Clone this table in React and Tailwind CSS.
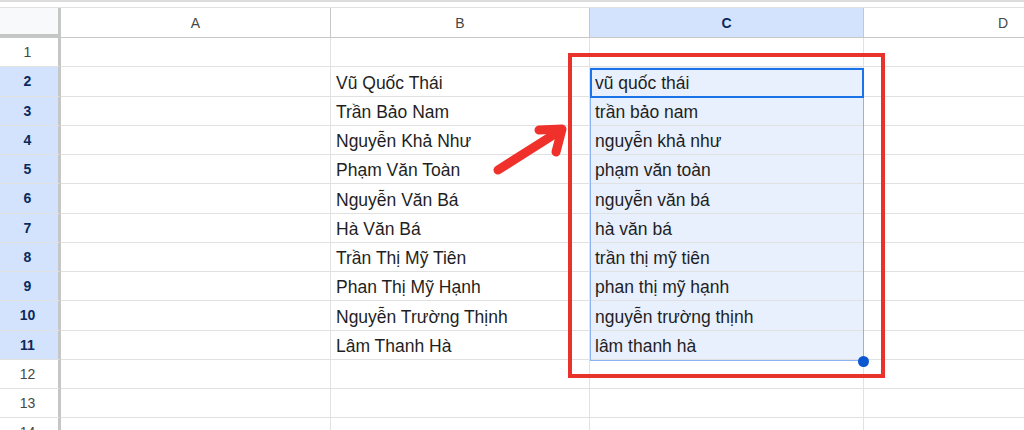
import React from 'react';

const names = [
  'Vũ Quốc Thái',
  'Trần Bảo Nam',
  'Nguyễn Khả Như',
  'Phạm Văn Toàn',
  'Nguyễn Văn Bá',
  'Hà Văn Bá',
  'Trần Thị Mỹ Tiên',
  'Phan Thị Mỹ Hạnh',
  'Nguyễn Trường Thịnh',
  'Lâm Thanh Hà',
];

const rows = Array.from({ length: 14 }, (_, i) => i + 1);

// One sheet row: number cell + columns A..D
const Row = ({ n }) => {
  const idx = n - 2;
  const name = idx >= 0 && idx < names.length ? names[idx] : '';
  const selected = name !== '';
  return (
    <div className="flex h-[29.25px] shrink-0">
      <div
        className={`w-[61px] shrink-0 flex items-center justify-center border-r-[3px] border-r-[#c4c7c5] border-b border-b-[#e1e1e1] pr-[3px] pt-[1px] text-[14px] ${
          selected ? 'bg-[#d3e3fd] text-[#0b2a5c] font-bold' : 'bg-white text-[#444746]'
        }`}
      >
        {n}
      </div>
      <div className="w-[270px] shrink-0 border-r border-b border-[#e1e1e1]" />
      <div className="w-[259px] shrink-0 border-r border-b border-[#e1e1e1] flex items-end pb-[2px] pl-[5px] text-[17.5px] leading-[21px] text-[#1f1f1f]">
        {name}
      </div>
      <div
        className={`w-[274px] shrink-0 border-r border-b border-[#e1e1e1] flex items-end pb-[2px] pl-[5px] text-[17.5px] leading-[21px] text-[#1f1f1f] ${
          selected ? 'bg-[#e8f0fe]' : ''
        }`}
      >
        {name.toLowerCase()}
      </div>
      <div className="flex-1 border-b border-[#e1e1e1]" />
    </div>
  );
};

function App() {
  return (
    <div
      className="relative w-[1024px] h-[430px] overflow-hidden bg-white"
      style={{ fontFamily: '"Liberation Sans", Arial, sans-serif' }}
    >
      <div className="h-[2px] bg-[#dcdcdc]" />
      <div className="h-[5px] bg-white" />

      {/* column headers */}
      <div className="flex h-[31px] border-t border-[#e1e1e1]">
        <div className="w-[61px] shrink-0 bg-[#f8f9fa] border-r-[3px] border-b-4 border-[#c4c7c5]" />
        <div className="w-[270px] shrink-0 border-r border-b border-[#c7c7c7] flex items-center justify-center pt-[2px] text-[14px] text-[#444746]">
          A
        </div>
        <div className="w-[259px] shrink-0 border-r border-b border-[#c7c7c7] flex items-center justify-center pt-[2px] text-[14px] text-[#444746]">
          B
        </div>
        <div className="w-[274px] shrink-0 bg-[#d3e3fd] border-r border-b border-[#c7c7c7] flex items-center justify-center pt-[2px] text-[14px] font-bold text-[#0b2a5c]">
          C
        </div>
        <div className="flex-1 border-b border-[#c7c7c7] flex items-center pt-[2px] text-[14px] text-[#444746]">
          <span className="w-[278px] text-center">D</span>
        </div>
      </div>

      {rows.map((n) => (
        <Row key={n} n={n} />
      ))}

      {/* selection range C2:C11 */}
      <div className="absolute left-[590px] top-[68px] w-[274px] h-[293px] border border-[#8ab4f8]" />
      <div className="absolute left-[590px] top-[68px] w-[274px] h-[30px] border-2 border-[#1a73e8]" />
      <div className="absolute left-[858px] top-[356px] w-[11px] h-[11px] rounded-full bg-[#0b57d0]" />

      {/* red highlight box */}
      <div className="absolute left-[568px] top-[53px] w-[317px] h-[325px] border-[4px] border-[#e8332c]" />

      {/* red arrow */}
      <svg className="absolute left-[488px] top-[118px]" width="84" height="62" viewBox="0 0 84 62">
        <g stroke="#f0302a" strokeWidth="9" strokeLinecap="round" strokeLinejoin="round" fill="none">
          <line x1="10" y1="52" x2="70" y2="14" />
          <polyline points="51,12 74,11 68,34" />
        </g>
      </svg>
    </div>
  );
}

export default App;
